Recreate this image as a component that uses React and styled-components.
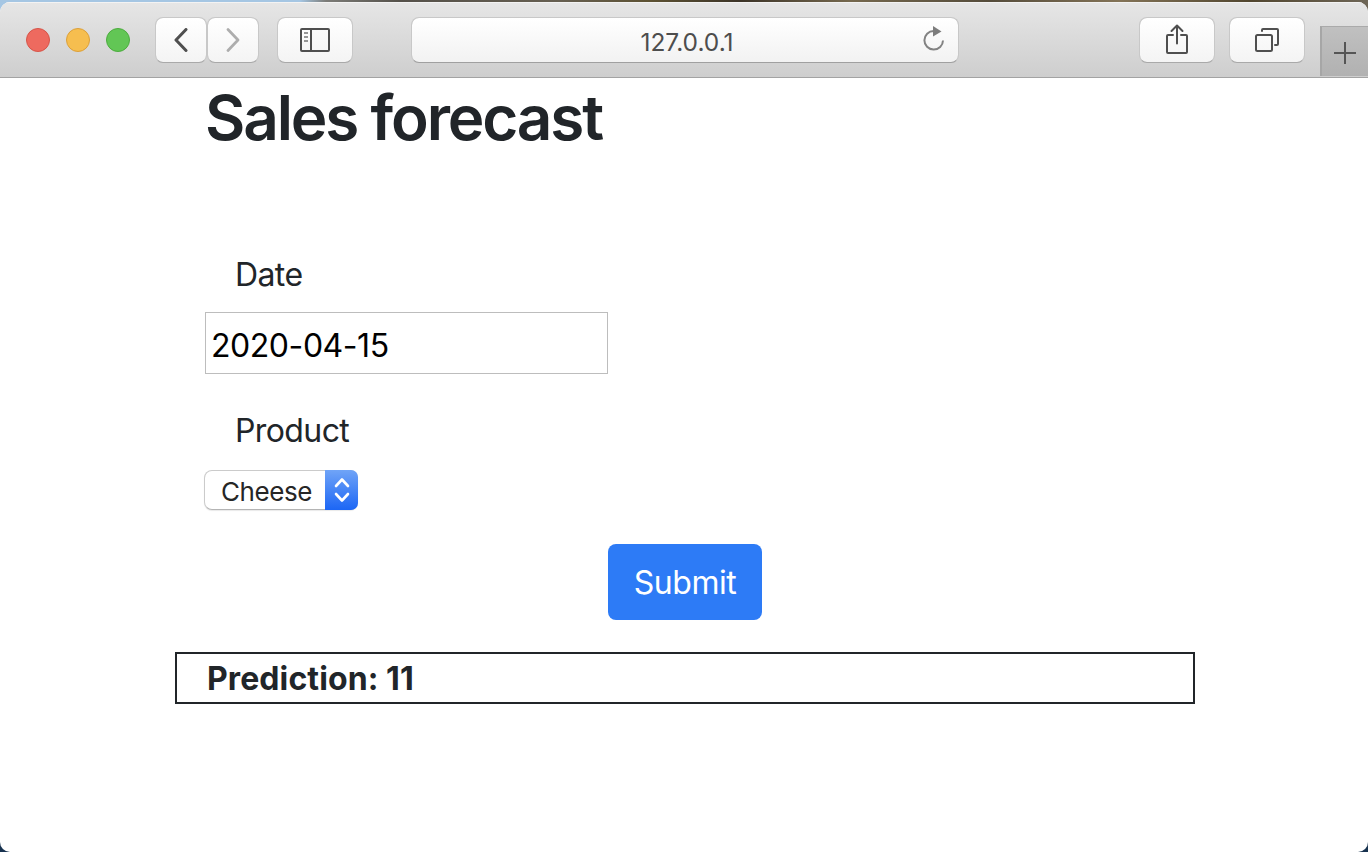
import React from "react";
import styled, { createGlobalStyle } from "styled-components";

const GlobalStyle = createGlobalStyle`
  *, *::before, *::after { box-sizing: border-box; }
  body { margin: 0; background: #1d3a5c; overflow: hidden; }
  input, select, button { font: inherit; margin: 0; }
`;

const Desktop = styled.div`
  height: 852px;
  padding-top: 2px;
  font-family: Inter, "Liberation Sans", sans-serif;
  font-weight: 440;
  color: #212529;
  background:
    linear-gradient(90deg, #a5c6e3 0 300px, #7c7c78 326px, #55514a 400px, #665f51 560px, #5d5233 650px, #3c3428 740px, #75684e 850px, #554c3b 990px, #837357 1120px, #51462f 1250px, #6e6657) 0 0 / 100% 12px no-repeat,
    #17324f;
`;

const Window = styled.div`
  display: flex;
  flex-direction: column;
  height: 850px;
  border-radius: 10px;
  overflow: hidden;
  background: #fff;
`;

const Toolbar = styled.header`
  display: flex;
  flex: none;
  height: 76px;
  padding: 15px 0 0 26px;
  border-bottom: 1px solid #a3a3a3;
  background: linear-gradient(#e6e6e6, #cecece);
  box-shadow: inset 0 1px #f3f3f3;
`;

const Lights = styled.div`
  display: flex;
  gap: 16px;
  margin: 11px 25px 0 0;
`;

const Light = styled.span`
  width: 24px;
  height: 24px;
  border-radius: 50%;
  background: ${(p) => p.$fill};
  border: 1px solid ${(p) => p.$edge};
`;

const ToolButton = styled.button`
  display: grid;
  place-items: center;
  flex: none;
  width: ${(p) => p.$width}px;
  height: 46px;
  margin-right: ${(p) => p.$gap}px;
  padding: 0;
  border: 1px solid #c8c8c8;
  border-bottom-color: #a9a9a9;
  border-radius: 8px;
  background: linear-gradient(#fff, #f4f4f4) padding-box;
  svg { display: block; }
`;

const AddressBar = styled.div`
  display: grid;
  grid-template-columns: 40px 1fr 36px;
  align-items: center;
  width: 548px;
  height: 46px;
  margin-right: 180px;
  border: 1px solid #c8c8c8;
  border-bottom-color: #a0a0a0;
  border-radius: 8px;
  background: linear-gradient(#fff, #f2f2f2) padding-box;
`;

const Address = styled.span`
  grid-column: 2;
  text-align: center;
  font-size: 24.5px;
  line-height: 30px;
  color: #4d4d4d;
  padding: 3px 0 0;
`;

const NewTab = styled.button`
  display: grid;
  place-items: center;
  flex: none;
  width: 48px;
  height: 50px;
  margin-top: 9px;
  padding: 3px 1px 0 0;
  border: 0;
  border-left: 2px solid #a6a6a6;
  border-top: 1px solid #aaa;
  background: linear-gradient(#c0c0c0, #b1b1b1);
`;

const Page = styled.main`
  width: 1020px;
  margin-left: 175px;
`;

const Title = styled.h1`
  margin: 1px 0 0 30px;
  font-size: 62px;
  font-weight: 560;
  line-height: 77px;
  letter-spacing: -2.15px;
`;

const Form = styled.form`
  display: flex;
  flex-direction: column;
  align-items: flex-start;
  padding: 95px 30px 0;
`;

const Label = styled.label`
  margin-left: 30px;
  font-size: 32px;
  line-height: 48px;
  letter-spacing: -0.6px;
`;

const DateInput = styled.input`
  width: 403px;
  height: 62px;
  margin: 13px 0 33px;
  padding: 4px 5px 0;
  border: 1px solid #bdbdbd;
  border-radius: 0;
  outline: 0;
  background: #fff;
  color: #000;
  font-size: 32px;
  letter-spacing: -0.45px;
`;

const SelectBox = styled.div`
  display: flex;
  width: 154px;
  height: 40px;
  margin: 15px 0 1px -1px;
  border: 1px solid #cbcbcb;
  border-bottom-color: #b4b4b4;
  border-radius: 8px;
  box-shadow: 0 1px 1px rgba(0, 0, 0, 0.09);
  background: #fff;
`;

const Select = styled.select`
  flex: 1;
  min-width: 0;
  padding: 2px 0 0 16px;
  border: 0;
  outline: 0;
  appearance: none;
  background: transparent;
  color: #262626;
  font-size: 26px;
  letter-spacing: -0.45px;
`;

const Stepper = styled.span`
  display: grid;
  place-items: center;
  width: 33px;
  margin: -1px -1px -1px 0;
  border-radius: 0 7px 7px 0;
  background: linear-gradient(#70a4f7, #1c66f5);
`;

const Submit = styled.button`
  align-self: center;
  width: 154px;
  height: 76px;
  margin-top: 33px;
  padding: 1px 0 0;
  border: 0;
  border-radius: 8px;
  background: #2d7bf6;
  color: #fff;
  font-size: 32px;
  letter-spacing: -0.45px;
`;

const Prediction = styled.div`
  height: 52px;
  margin-top: 32px;
  padding-left: 30px;
  border: 2px solid #212529;
  font-size: 32px;
  font-weight: 700;
  line-height: 49px;
  letter-spacing: 0.1px;
`;

const Stroke = ({ w, h, color = "#4f4f4f", width = 2, children }) => (
  <svg width={w} height={h} viewBox={`0 0 ${w} ${h}`} fill="none" stroke={color} strokeWidth={width} strokeLinecap="round" strokeLinejoin="round">
    {children}
  </svg>
);

export default function App() {
  return (
    <Desktop>
      <GlobalStyle />
      <Window>
        <Toolbar>
          <Lights>
            <Light $fill="#ee6a5f" $edge="#d65549" />
            <Light $fill="#f6be4f" $edge="#dca03a" />
            <Light $fill="#62c655" $edge="#4cac3e" />
          </Lights>
          <ToolButton $width={52} $gap={0} aria-label="Back">
            <Stroke w={14} h={24} width={3}><path d="M12 1.5 2 12l10 10.5" /></Stroke>
          </ToolButton>
          <ToolButton $width={52} $gap={18} aria-label="Forward">
            <Stroke w={14} h={24} width={2.7} color="#adadad"><path d="M2 1.5 12 12 2 22.5" /></Stroke>
          </ToolButton>
          <ToolButton $width={76} $gap={58} aria-label="Sidebar">
            <Stroke w={30} h={24}>
              <rect x="1" y="1" width="28" height="22" rx="1" />
              <path d="M11 1v22" />
              <path d="M4 5h4M4 9h4M4 13h4" stroke="#969696" strokeLinecap="butt" />
            </Stroke>
          </ToolButton>
          <AddressBar>
            <Address>127.0.0.1</Address>
            <svg width="24" height="28" viewBox="0 0 24 28" fill="none">
              <path d="M21 14.5A9.3 9.3 0 1 1 11.7 5" stroke="#828282" strokeWidth="2" />
              <path d="M11 0v10.5L19.5 5.5z" fill="#7c7c7c" />
            </svg>
          </AddressBar>
          <ToolButton $width={76} $gap={14} aria-label="Share">
            <Stroke w={24} h={32}>
              <path d="M8 11H3a1 1 0 0 0-1 1v16a1 1 0 0 0 1 1h18a1 1 0 0 0 1-1V12a1 1 0 0 0-1-1h-5M12 19.5V1.5M6.5 7 12 1.5l5.5 5.5" />
            </Stroke>
          </ToolButton>
          <ToolButton $width={76} $gap={15} aria-label="Show tabs">
            <Stroke w={24} h={24}>
              <rect x="1" y="7" width="16" height="16" rx="1.5" />
              <path d="M7 3V2a1 1 0 0 1 1-1h14a1 1 0 0 1 1 1v14a1 1 0 0 1-1 1h-2" />
            </Stroke>
          </ToolButton>
          <NewTab aria-label="New tab">
            <Stroke w={22} h={22} color="#555"><path d="M0 11h22M11 0v22" /></Stroke>
          </NewTab>
        </Toolbar>
        <Page>
          <Title>Sales forecast</Title>
          <Form onSubmit={(e) => e.preventDefault()}>
            <Label htmlFor="date">Date</Label>
            <DateInput id="date" defaultValue="2020-04-15" />
            <Label htmlFor="product">Product</Label>
            <SelectBox>
              <Select id="product"><option>Cheese</option></Select>
              <Stepper>
                <Stroke w={16} h={26} width={2.6} color="#fff"><path d="m2 9 6-6.5L14 9M2 17l6 6.5 6-6.5" /></Stroke>
              </Stepper>
            </SelectBox>
            <Submit>Submit</Submit>
          </Form>
          <Prediction>Prediction: 11</Prediction>
        </Page>
      </Window>
    </Desktop>
  );
}
